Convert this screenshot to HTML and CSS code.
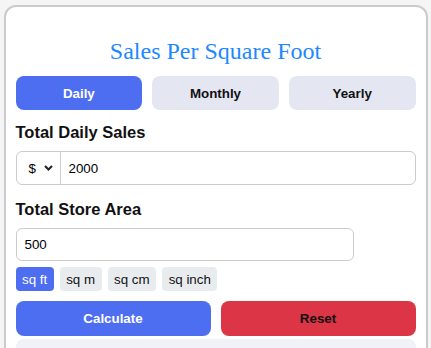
FILE: index.html
```html
<!DOCTYPE html>
<html>
	<head>
		<meta charset="utf-8">
		<meta name="viewport" content="width=device-width, initial-scale=1">
		<title>Sales Per Square Foot</title>
		<link rel="stylesheet" href="styles.css">
	</head>
	<body>
		<div class="card">
			<h2 class="title">Sales Per Square Foot</h2>

			<div class="tabs">
				<button class="tab active">Daily</button>
				<button class="tab">Monthly</button>
				<button class="tab">Yearly</button>
			</div>

			<label class="label">Total Daily Sales</label>
			<div class="group">
				<div class="cur">
					<span class="cur-sign">$</span>
					<svg class="chev" width="9" height="6" viewBox="0 0 9 6"><path d="M1 1l3.5 3.5L8 1" fill="none" stroke="#222" stroke-width="2"/></svg>
				</div>
				<input class="field" value="2000">
			</div>

			<label class="label">Total Store Area</label>
			<input class="field area" value="500">

			<div class="units">
				<button class="unit active">sq ft</button>
				<button class="unit">sq m</button>
				<button class="unit">sq cm</button>
				<button class="unit">sq inch</button>
			</div>

			<div class="actions">
				<button class="btn calc">Calculate</button>
				<button class="btn reset">Reset</button>
			</div>

			<div class="result"></div>
		</div>
	</body>
</html>
```

FILE: styles.css
```css
body{
	margin: 0;
	background: #f5f5f5;
	font-family: "Liberation Sans", Arial, sans-serif;
}
.card{
	box-sizing: border-box;
	width: 424px;
	margin: 5px auto;
	padding: 10px;
	background: white;
	border: 2px solid #cbcbcb;
	border-radius: 12px;
}
.title{
	margin: 21px 0 11px;
	text-align: center;
	font-family: "Liberation Serif", "Times New Roman", serif;
	font-weight: normal;
	font-size: 24px;
	color: #1e88ff;
}
button{
	font-family: "Liberation Sans", Arial, sans-serif;
	font-size: 13.333px;
	border: none;
	cursor: pointer;
}
.tabs{
	display: flex;
	gap: 10px;
	margin-bottom: 13px;
}
.tab{
	flex: 1;
	height: 34px;
	border-radius: 8px;
	background: #e4e7f1;
	color: #111;
	font-weight: bold;
}
.tab.active{
	background: #4e6ef2;
	color: white;
}
.label{
	display: block;
	font-size: 16.5px;
	line-height: 18px;
	font-weight: bold;
	color: #111;
	margin-bottom: 10px;
}
.group{
	display: flex;
	height: 34px;
	box-sizing: border-box;
	border: 1px solid #ccc;
	border-radius: 6px;
	margin-bottom: 15px;
}
.cur{
	display: flex;
	align-items: center;
	gap: 8px;
	width: 44px;
	box-sizing: border-box;
	padding-left: 12px;
	border-right: 1px solid #ccc;
	font-size: 13.333px;
}
.field{
	flex: 1;
	border: none;
	outline: none;
	padding: 0 8px;
	font-family: "Liberation Sans", Arial, sans-serif;
	font-size: 13.333px;
	color: #000;
	background: transparent;
	border-radius: 6px;
}
.field.area{
	display: block;
	box-sizing: border-box;
	width: 338px;
	height: 33px;
	border: 1px solid #ccc;
}
.units{
	display: flex;
	gap: 6px;
	margin: 6px 0 10px;
}
.unit{
	height: 24px;
	padding: 0 6.5px;
	border-radius: 4px;
	background: #e9ecef;
	color: #111;
}
.unit.active{
	background: #4e6ef2;
	color: white;
}
.actions{
	display: flex;
	gap: 10px;
}
.btn{
	flex: 1;
	height: 35px;
	border-radius: 8px;
	font-weight: bold;
}
.calc{
	background: #4e6ef2;
	color: white;
}
.reset{
	background: #dc3545;
	color: #111;
}
.result{
	margin-top: 3px;
	height: 60px;
	background: #f0f2f7;
	border-radius: 8px;
}
```
